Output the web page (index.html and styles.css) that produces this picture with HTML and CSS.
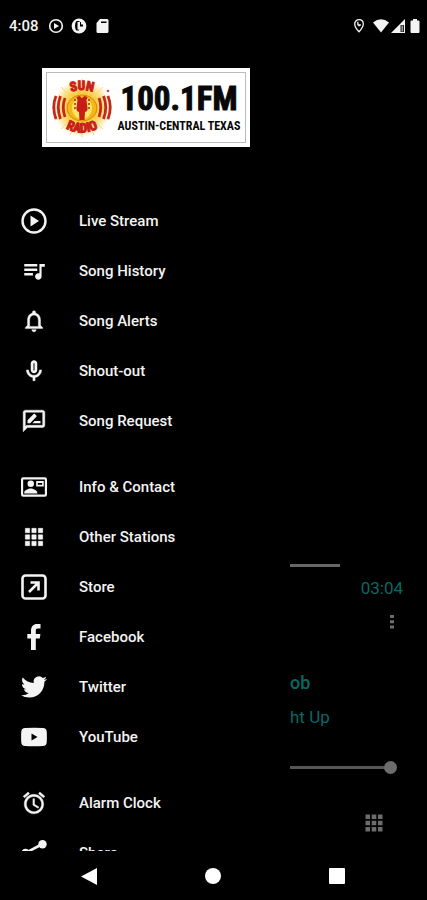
FILE: index.html
```html
<!DOCTYPE html>
<html lang="en">
<head>
<meta charset="utf-8">
<meta name="viewport" content="width=device-width, initial-scale=1">
<title>Sun Radio</title>
<link rel="stylesheet" href="styles.css">
</head>
<body>
<header class="status">
  <div class="status-side">
    <time class="clock">4:08</time>
    <svg class="status-icon" viewBox="0 0 16 16"><circle cx="8" cy="8" r="6.300" fill="none" stroke="currentColor" stroke-width="1.600"/><path d="M6 5v6l5-3z"/></svg>
    <svg class="status-icon" viewBox="0 0 16 16"><circle cx="8" cy="8" r="7.400"/><path d="M5.500 3h3v1H6.500v7.500h1.500v1H5.500q-1.500-1-1.500-4.500t1.500-5z" fill="#000"/><path d="M9 4h3v4.500H9z" fill="#000"/><path d="M10 4h2v2.500h-2z"/></svg>
    <svg class="status-icon" viewBox="0 0 16 16"><path d="M6 1h7q1.500 0 1.500 1.500v11q0 1.500-1.500 1.500H4q-1.500 0-1.500-1.500V5z"/><path d="M7 3.500h5.500v1.500H7z" fill="#000"/></svg>
  </div>
  <div class="status-side status-right">
    <svg class="status-icon pin" viewBox="0 0 16 16"><path d="M8 1.700c-2.600 0-4.300 1.900-4.300 4.200C3.700 9 8 13.800 8 13.800S12.300 9 12.300 5.900C12.300 3.600 10.600 1.700 8 1.700z" fill="none" stroke="currentColor" stroke-width="1.300"/><path d="M6.200 3.800h1.300v2.400h2.400v1.300L8 8.500 6.200 7z"/></svg>
    <svg class="status-icon" viewBox="0 0 16 16"><path d="M0 4.500Q8-2 16 4.500L8 14.500z"/></svg>
    <svg class="status-icon" viewBox="0 0 16 16"><path d="M15 1v14H1z"/><path d="M10.500 7h3.500v7h-3.500z" fill="#222"/><path d="M11.500 7.500h1.500v6h-1.500z" fill="#999"/></svg>
    <svg class="status-icon" viewBox="0 0 16 16"><path d="M6 1h4v1.500h1.500q1 0 1 1V14q0 1-1 1h-7q-1 0-1-1V3.500q0-1 1-1H6z"/></svg>
  </div>
</header>

<main class="screen">
  <nav class="drawer" aria-label="Main menu">
    <div class="logo">
      <svg class="emblem" viewBox="0 0 60 60">
        <defs>
          <radialGradient id="glow"><stop offset="0" stop-color="#fff3a0"/><stop offset=".45" stop-color="#f8c423"/><stop offset=".75" stop-color="#fce08a"/><stop offset="1" stop-color="#fff"/></radialGradient>
          <path id="arc-top" d="M12 17Q30 7 48 17"/>
          <path id="arc-bottom" d="M7 46Q30 63 53 46"/>
        </defs>
        <circle cx="30" cy="30" r="29" fill="url(#glow)"/>
        <path d="M30 1v58M1 30h58M9 9l42 42M51 9L9 51M18 3l24 54M42 3L18 57M3 18l54 24M3 42l54-24" stroke="#fad77a"/>
        <ellipse cx="30" cy="30" rx="15" ry="13" fill="#f4b817" stroke="#d98713"/>
        <ellipse cx="30" cy="30" rx="10" ry="11" fill="#ffe66b"/>
        <path d="M27.500 42l-.5-8q-3-1-2.500-4l1-8-1-3 3-1 2.500 2 2.500-2 3 1-1 3 1 8q.5 3-2.500 4l-.5 8z" fill="#c71d16"/>
        <path d="M24 22h-2m2 4h-2m2 4h-2M36 22h2m-2 4h2m-2 4h2" stroke="#a8281a" stroke-width="1.500"/>
        <g fill="none" stroke="#c4281c" stroke-width="2.800">
          <path d="M13 20Q9.500 29 13 39M8.500 18Q4 29 8.500 41M4 18Q-.5 29 4 41"/>
          <path d="M47 20Q50.500 29 47 39M51.500 18Q56 29 51.500 41M56 18Q60.500 29 56 41"/>
        </g>
        <text class="emblem-text"><textPath href="#arc-top" startOffset="50%">SUN</textPath></text>
        <text class="emblem-text"><textPath href="#arc-bottom" startOffset="50%">RADIO</textPath></text>
        <circle cx="56" cy="13" r="1.300" fill="#d9483c"/>
      </svg>
      <div class="logo-copy">
        <span class="frequency">100.1FM</span>
        <span class="region">AUSTIN-CENTRAL TEXAS</span>
      </div>
    </div>

    <ul class="menu">
      <li><a class="item" href="#live"><svg class="icon" viewBox="0 0 26 26"><circle cx="13" cy="13" r="11.500" fill="none" stroke="currentColor" stroke-width="2.400"/><path d="M9.500 7.500v11l8.500-5.500z"/></svg>Live Stream</a></li>
      <li><a class="item" href="#history"><svg class="icon" viewBox="0 0 24 24"><path d="M15 5.500H3v2.300h12V5.500zm0 4.200H3V12h12V9.700zM3 16.200h8v-2.300H3v2.300zM17 5.500v8.680c-.31-.11-.65-.18-1-.18-1.660 0-3 1.340-3 3s1.340 3 3 3 3-1.340 3-3V8h3V5.500h-5z"/></svg>Song History</a></li>
      <li><a class="item" href="#alerts"><svg class="icon" viewBox="0 0 24 24"><path d="M12 22c1.100 0 2-.9 2-2h-4c0 1.100.9 2 2 2zm6-6v-5c0-3.070-1.630-5.640-4.500-6.320V4c0-.83-.67-1.500-1.500-1.500s-1.500.67-1.500 1.500v.68C7.640 5.360 6 7.920 6 11v5l-2 2v1h16v-1l-2-2zm-2 1H8v-6c0-2.480 1.510-4.500 4-4.500s4 2.020 4 4.500v6z" stroke="currentColor" stroke-width=".4"/></svg>Song Alerts</a></li>
      <li><a class="item" href="#shout"><svg class="icon" viewBox="0 0 24 24"><path d="M12 14c1.660 0 3-1.340 3-3V5c0-1.660-1.340-3-3-3S9 3.340 9 5v6c0 1.660 1.340 3 3 3z"/><path d="M11.300 5v6q.7 1 1.400 0V5q-.7-1-1.400 0z" fill="#555"/><path d="M17 11c0 2.760-2.240 5-5 5s-5-2.240-5-5H5c0 3.530 2.610 6.430 6 6.920V21h2v-3.080c3.390-.49 6-3.390 6-6.920h-2z" stroke="currentColor" stroke-width=".4"/></svg>Shout-out</a></li>
      <li><a class="item" href="#request"><svg class="icon" viewBox="0 0 24 24"><path d="M20 2H4c-1.100 0-2 .9-2 2v18l4-4h14c1.100 0 2-.9 2-2V4c0-1.100-.9-2-2-2zm0 14H5.170L4 17.170V4h16v12z" stroke="currentColor" stroke-width=".4"/><path d="M10.500 14H18v-2h-5.500zM14.360 7.870c.2-.2.2-.51 0-.71l-1.770-1.770c-.2-.2-.51-.2-.71 0L6 11.260V14h2.500l5.860-6.130z"/></svg>Song Request</a></li>
    </ul>
    <ul class="menu">
      <li><a class="item" href="#contact"><svg class="icon" viewBox="0 0 24 24"><path d="M2 3h20q2 0 2 2v14q0 2-2 2H2q-2 0-2-2V5q0-2 2-2zm0 2v14h20V5z" fill-rule="evenodd"/><circle cx="9" cy="9" r="3"/><path d="M3 18v-1c0-2 4-3.600 6-3.600s6 1.600 6 3.600v1zM14 6.500h7v5h-7zm1.500 1.800v1.700h4V8.300z" fill-rule="evenodd"/></svg>Info &amp; Contact</a></li>
      <li><a class="item" href="#stations"><svg class="icon" viewBox="0 0 24 24"><path d="M4 8h4V4H4v4zm6 12h4v-4h-4v4zm-6 0h4v-4H4v4zm0-6h4v-4H4v4zm6 0h4v-4h-4v4zm6-10v4h4V4h-4zm-6 4h4V4h-4v4zm6 6h4v-4h-4v4zm0 6h4v-4h-4v4z" stroke="currentColor" stroke-width=".5"/></svg>Other Stations</a></li>
      <li><a class="item" href="#store"><svg class="icon" viewBox="0 0 26 26"><rect x="1.500" y="1.500" width="23" height="23" rx="3" fill="none" stroke="currentColor" stroke-width="2.600"/><path d="M8 18l9-9M9.500 8.500H17.500V16.500" fill="none" stroke="currentColor" stroke-width="2.600"/></svg>Store</a></li>
      <li><a class="item" href="#facebook"><svg class="icon" viewBox="0 0 26 26"><path d="M10 26V14.500H6.300V10H10V6.700C10 2.500 12.300 0 16.200 0H19.500v4.500H17c-1.700 0-2.200.8-2.200 2.300V10h4.600l-.6 4.500h-4V26z"/></svg>Facebook</a></li>
      <li><a class="item" href="#twitter"><svg class="icon" viewBox="0 0 24 24"><path d="M23.950 4.570a10 10 0 0 1-2.820.77 4.960 4.960 0 0 0 2.160-2.720c-.95.550-2 .95-3.130 1.180a4.920 4.920 0 0 0-8.380 4.480C7.690 8.090 4.070 6.130 1.640 3.160a4.820 4.820 0 0 0-.67 2.480c0 1.710.87 3.210 2.190 4.090a4.900 4.900 0 0 1-2.230-.61v.06a4.920 4.920 0 0 0 3.950 4.830 5 5 0 0 1-2.210.08 4.940 4.940 0 0 0 4.600 3.420A9.870 9.870 0 0 1 0 19.540a13.990 13.990 0 0 0 7.550 2.210c9.050 0 14-7.500 14-13.980 0-.21 0-.42-.02-.63a9.940 9.940 0 0 0 2.420-2.570z"/></svg>Twitter</a></li>
      <li><a class="item" href="#youtube"><svg class="icon" viewBox="0 0 26 26"><path fill-rule="evenodd" d="M4 4Q13 3.400 22 4q3.500.2 3.700 3.500.4 5.500 0 11Q25.500 21.800 22 22q-9 .6-18 0Q.5 21.800.3 18.500q-.4-5.500 0-11Q.5 4.200 4 4zm6.500 5.500v7l6-3.500z"/></svg>YouTube</a></li>
    </ul>
    <ul class="menu">
      <li><a class="item" href="#alarm"><svg class="icon" viewBox="0 0 24 24"><path d="M22 5.720l-4.600-3.860-1.290 1.530 4.600 3.860L22 5.720zM7.880 3.390L6.600 1.860 2 5.710l1.290 1.530 4.590-3.850zM12.500 8H11v6l4.750 2.850.75-1.230-4-2.370V8zM12 4c-4.970 0-9 4.030-9 9s4.020 9 9 9a9 9 0 0 0 0-18zm0 16c-3.870 0-7-3.130-7-7s3.130-7 7-7 7 3.130 7 7-3.130 7-7 7z" stroke="currentColor" stroke-width=".4"/></svg>Alarm Clock</a></li>
      <li><a class="item" href="#share"><svg class="icon" viewBox="0 0 26 26"><path d="M21.500 4L4.500 13l17 9" fill="none" stroke="currentColor" stroke-width="2.600"/><circle cx="21.500" cy="4.200" r="4.200"/><circle cx="4.500" cy="13" r="4.200"/><circle cx="21.500" cy="21.800" r="4.200"/></svg>Share</a></li>
    </ul>
  </nav>

  <section class="player" aria-label="Now playing">
    <div class="progress"></div>
    <time class="duration">03:04</time>
    <button class="more" aria-label="More options"><svg class="player-icon" viewBox="0 0 20 20"><path d="M8 3h4v3H8zM8 8.300h4v3H8zM8 13.500h4v3H8z"/></svg></button>
    <p class="track artist">ob</p>
    <p class="track">ht Up</p>
    <input class="volume" type="range" min="0" max="100" value="100" aria-label="Volume">
    <button class="grid-button" aria-label="Stations"><svg class="player-icon" viewBox="0 0 20 20"><path d="M1.500 1.500h4.500v4.500H1.500zM7.700 1.500h4.600v4.500H7.700zM14 1.500h4.500v4.500H14zM1.500 7.700h4.500v4.600H1.500zM7.700 7.700h4.600v4.600H7.700zM14 7.700h4.500v4.600H14zM1.500 14h4.500v4.500H1.500zM7.700 14h4.600v4.500H7.700zM14 14h4.500v4.500H14z"/></svg></button>
  </section>
</main>

<footer class="system">
  <button aria-label="Back"><svg class="system-icon" viewBox="0 0 18 18"><path d="M17 1v17L1 9.500z"/></svg></button>
  <button aria-label="Home"><svg class="system-icon" viewBox="0 0 18 18"><circle cx="9" cy="9" r="8"/></svg></button>
  <button aria-label="Recent apps"><svg class="system-icon" viewBox="0 0 18 18"><rect x="1" y="1" width="16" height="16" rx="1"/></svg></button>
</footer>
</body>
</html>
```
FILE: styles.css
```css
* { box-sizing: border-box; }

body {
  margin: 0;
  height: 100vh;
  display: flex;
  flex-direction: column;
  background: #000;
  color: #f4f4f4;
  font-family: Roboto, "Liberation Sans", sans-serif;
  font-size: 15px;
  font-weight: 500;
}

svg { display: block; fill: currentColor; flex: none; }

button {
  border: 0;
  padding: 0;
  background: none;
  color: inherit;
}

.status {
  height: 52px;
  flex: none;
  display: flex;
  justify-content: space-between;
  align-items: center;
  padding: 0 4px 0 9px;
}

.status-side { display: flex; align-items: center; gap: 7px; }
.status-right { gap: 1px; }
.clock { margin-right: 2px; }
.status-icon { width: 16px; height: 16px; }
.pin { margin-right: 5px; }

.screen {
  flex: 1;
  min-height: 0;
  overflow: hidden;
  display: grid;
  grid-template-columns: 290px 1fr;
}

.drawer { min-height: 0; overflow: hidden; }

.logo {
  width: 208px;
  height: 79px;
  margin: 16px 0 49px 42px;
  border: 3px solid #fff;
  outline: 1px solid #bbb;
  outline-offset: -5px;
  background: #fff;
  color: #080808;
  display: flex;
  align-items: center;
  padding: 0 3px 0 7px;
  gap: 2px;
}

.emblem { width: 60px; height: 60px; }

.emblem-text {
  font-family: "Roboto Condensed", Roboto, "Liberation Sans", sans-serif;
  font-size: 13px;
  font-weight: 700;
  fill: #c9201a;
  stroke: #c9201a;
  stroke-width: 1px;
  text-anchor: middle;
}

.logo-copy {
  flex: 1;
  display: flex;
  flex-direction: column;
  align-items: center;
  font-family: "Liberation Sans Narrow", "Roboto Condensed", "Liberation Sans", sans-serif;
  font-weight: 700;
  white-space: nowrap;
}

.frequency { font-size: 33px; line-height: 36px; -webkit-text-stroke: 1px #080808; }
.region { font-size: 12px; line-height: 18px; }

.menu { list-style: none; margin: 0 0 16px; padding: 0; }

.item {
  height: 50px;
  display: flex;
  align-items: center;
  gap: 32px;
  padding-left: 21px;
  color: inherit;
  text-decoration: none;
}

.icon { width: 26px; height: 26px; }

.player {
  display: flex;
  flex-direction: column;
  justify-content: flex-end;
  color: #6c6c6c;
}

.progress { width: 50px; height: 3px; background: #666; margin-bottom: 11px; }

.duration {
  align-self: flex-end;
  margin-right: 24px;
  line-height: 20px;
  font-size: 17px;
  font-weight: 400;
  color: #056a64;
}

.more { align-self: flex-end; margin: 14px 25px 34px 0; }
.player-icon { width: 20px; height: 20px; }

.track {
  margin: 0;
  line-height: 34px;
  font-size: 17px;
  font-weight: 400;
  color: #056a64;
}

.artist { font-size: 18px; font-weight: 500; }

.volume {
  appearance: none;
  width: 107px;
  height: 13px;
  margin: 27px 0 39px;
  background: linear-gradient(#555, #555) 0 5px / 98px 3px no-repeat;
}

.volume::-webkit-slider-thumb {
  appearance: none;
  width: 13px;
  height: 13px;
  border-radius: 50%;
  background: #6c6c6c;
}

.grid-button { align-self: flex-end; margin: 0 43px 18px 0; }

.system {
  height: 49px;
  flex: none;
  display: flex;
  align-items: center;
  justify-content: space-between;
  padding: 0 81px 0 80px;
  color: #fff;
}

.system-icon { width: 18px; height: 18px; }
```
